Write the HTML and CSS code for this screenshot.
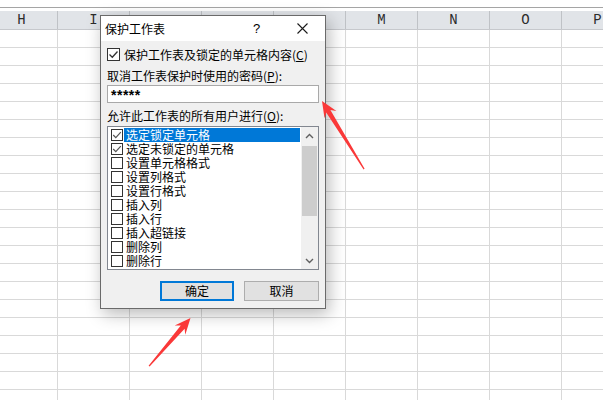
FILE: index.html
```html
<!DOCTYPE html>
<html lang="zh-CN">
<head>
    <meta charset="UTF-8">
    <title>保护工作表</title>
    <link rel="stylesheet" href="styles.css">
</head>
<body>
    <!-- 表格背景 -->
    <div class="sheet">
        <div class="topbar"></div>
        <div class="head">
            <div class="col">H</div>
            <div class="col">I</div>
            <div class="col"></div>
            <div class="col"></div>
            <div class="col"></div>
            <div class="col">M</div>
            <div class="col">N</div>
            <div class="col">O</div>
            <div class="col">P</div>
        </div>
        <div class="cells"></div>
    </div>

    <!-- 对话框 -->
    <div class="dialog">
        <div class="titlebar">
            <span class="title">保护工作表</span>
            <span class="help">?</span>
            <span class="close">
                <svg width="11" height="11" viewBox="0 0 11 11"><path d="M0.5 0.5 L10.5 10.5 M10.5 0.5 L0.5 10.5" stroke="#1a1a1a" stroke-width="1.1" fill="none"/></svg>
            </span>
        </div>
        <div class="body">
            <div class="check-row">
                <span class="box big">
                    <svg width="11" height="11" viewBox="0 0 11 11"><path d="M1.5 5.5 L4.3 8.3 L9.5 2.5" stroke="#333" stroke-width="1.3" fill="none"/></svg>
                </span>
                <span>保护工作表及锁定的单元格内容(<u>C</u>)</span>
            </div>
            <div class="label">取消工作表保护时使用的密码(<u>P</u>):</div>
            <div class="input">*****</div>
            <div class="label second">允许此工作表的所有用户进行(<u>O</u>):</div>

            <div class="list">
                <div class="items">
                    <div class="item"><span class="box"><svg width="10" height="10" viewBox="0 0 10 10"><path d="M1.2 5 L3.8 7.6 L8.8 2.2" stroke="#555" stroke-width="1.2" fill="none"/></svg></span><span class="text selected">选定锁定单元格</span></div>
                    <div class="item"><span class="box"><svg width="10" height="10" viewBox="0 0 10 10"><path d="M1.2 5 L3.8 7.6 L8.8 2.2" stroke="#555" stroke-width="1.2" fill="none"/></svg></span><span class="text">选定未锁定的单元格</span></div>
                    <div class="item"><span class="box"></span><span class="text">设置单元格格式</span></div>
                    <div class="item"><span class="box"></span><span class="text">设置列格式</span></div>
                    <div class="item"><span class="box"></span><span class="text">设置行格式</span></div>
                    <div class="item"><span class="box"></span><span class="text">插入列</span></div>
                    <div class="item"><span class="box"></span><span class="text">插入行</span></div>
                    <div class="item"><span class="box"></span><span class="text">插入超链接</span></div>
                    <div class="item"><span class="box"></span><span class="text">删除列</span></div>
                    <div class="item"><span class="box"></span><span class="text">删除行</span></div>
                </div>
                <div class="scrollbar">
                    <div class="arrow"><svg width="9" height="6" viewBox="0 0 9 6"><path d="M1 5 L4.5 1.5 L8 5" stroke="#606060" stroke-width="1.4" fill="none"/></svg></div>
                    <div class="track"><div class="thumb"></div></div>
                    <div class="arrow"><svg width="9" height="6" viewBox="0 0 9 6"><path d="M1 1 L4.5 4.5 L8 1" stroke="#606060" stroke-width="1.4" fill="none"/></svg></div>
                </div>
            </div>

            <div class="buttons">
                <button class="btn primary">确定</button>
                <button class="btn">取消</button>
            </div>
        </div>
    </div>

    <!-- 红色箭头标注 -->
    <svg class="marks" width="603" height="400" viewBox="0 0 603 400">
        <polygon fill="#fa3838" points="322,101 336.4,110.9 330.4,109.9 364.6,168.8 363.6,169.4 326.2,112.5 324.5,118.3"/>
        <polygon fill="#fa3838" points="190.5,318 185.3,334.7 184.6,328.7 149.6,366.4 148.6,365.7 180.8,325.5 174.7,325.5"/>
    </svg>
</body>
</html>
```

FILE: styles.css
```css
body {
    margin: 0;
    width: 603px;
    height: 400px;
    overflow: hidden;
    position: relative;
    background: #ffffff;
    font-family: "Noto Sans CJK SC", "Noto Sans", sans-serif;
    font-size: 12px;
    color: #000000;
}

/* 表格 */
.sheet {
    width: 603px;
    overflow: hidden;
}

.topbar {
    height: 7px;
    border-bottom: 1px solid #a5a5a5;
    margin-bottom: 3px;
}

.head {
    display: flex;
    margin-left: -14px;
    height: 18px;
    background: #e1e4e8;
    border-bottom: 1px solid #c6c8cc;
}

.col {
    flex: 0 0 72px;
    box-sizing: border-box;
    border-right: 1px solid #bfc2c6;
    text-align: center;
    line-height: 18px;
    font-family: "Liberation Mono", monospace;
    font-size: 14px;
    color: #2b2b2b;
}

.cells {
    height: 380px;
    background-image:
        repeating-linear-gradient(to bottom, transparent 0 17px, #d9d9d9 17px 18px),
        repeating-linear-gradient(to right, transparent 0 71px, #d9d9d9 71px 72px);
    background-position: -14px 0;
}

/* 对话框 */
.dialog {
    position: absolute;
    left: 100px;
    top: 15px;
    width: 226px;
    height: 294px;
    box-sizing: border-box;
    border: 1px solid #6a6a6a;
    background: #f0f0f0;
    box-shadow: 3px 5px 16px rgba(0, 0, 0, 0.28);
}

.titlebar {
    display: flex;
    align-items: center;
    height: 25px;
    background: #ffffff;
    padding-left: 4px;
}

.title {
    flex: 1;
    font-size: 12px;
}

.help {
    width: 14px;
    margin-right: 30px;
    font-family: "Liberation Sans", sans-serif;
    font-size: 13px;
}

.close {
    width: 11px;
    height: 11px;
    margin-right: 17px;
}

.close svg {
    display: block;
}

.body {
    padding: 0 6px;
}

.check-row {
    display: flex;
    align-items: center;
    margin-top: 7px;
    height: 13px;
    line-height: 13px;
}

.box {
    flex: 0 0 auto;
    box-sizing: border-box;
    width: 12px;
    height: 12px;
    border: 1px solid #333333;
    background: #ffffff;
    display: flex;
    align-items: center;
    justify-content: center;
}

.box.big {
    width: 13px;
    height: 13px;
    margin-right: 4px;
}

u {
    text-decoration: underline;
}

.label {
    margin-top: 8px;
    line-height: 14px;
    height: 14px;
}

.label.second {
    margin-top: 6px;
}

.input {
    margin-top: 2px;
    height: 18px;
    box-sizing: border-box;
    border: 1px solid #a9a9a9;
    background: #ffffff;
    padding-left: 3px;
    font-family: "Liberation Sans", sans-serif;
    font-weight: bold;
    font-size: 14px;
    line-height: 19px;
    letter-spacing: 0.5px;
}

/* 列表 */
.list {
    margin-top: 3px;
    height: 144px;
    box-sizing: border-box;
    border: 1px solid #828790;
    background: #ffffff;
    display: flex;
}

.items {
    flex: 1;
    padding-top: 1px;
}

.item {
    display: flex;
    align-items: center;
    height: 14px;
    padding-left: 3px;
}

.text {
    margin-left: 1px;
    padding: 0 2px;
    line-height: 14px;
}

.text.selected {
    flex: 1;
    margin-right: 1px;
    background: #0078d7;
    color: #ffffff;
}

.scrollbar {
    width: 17px;
    background: #f0f0f0;
    display: flex;
    flex-direction: column;
}

.arrow {
    height: 17px;
    display: flex;
    align-items: center;
    justify-content: center;
}

.track {
    flex: 1;
    padding: 2px 1px 0;
}

.thumb {
    height: 70px;
    background: #cdcdcd;
}

/* 按钮 */
.buttons {
    display: flex;
    justify-content: flex-end;
    gap: 10px;
    margin-top: 11px;
}

.btn {
    height: 20px;
    width: 75px;
    box-sizing: border-box;
    border: 1px solid #adadad;
    background: #e1e1e1;
    font-family: "Noto Sans CJK SC", sans-serif;
    font-size: 12px;
    padding: 0;
    line-height: 16px;
}

.btn.primary {
    width: 74px;
    border: 2px solid #0078d7;
}

.marks {
    position: absolute;
    left: 0;
    top: 0;
    pointer-events: none;
}
```
